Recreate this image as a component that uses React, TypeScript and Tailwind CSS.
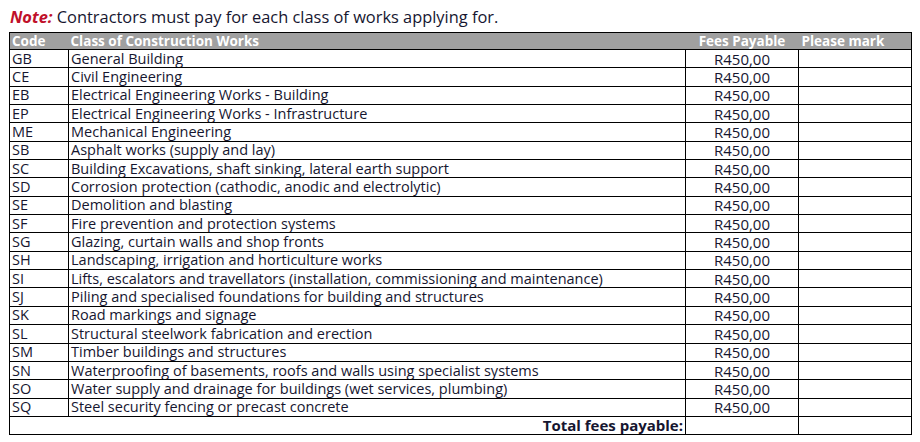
import React from "react";

const rows: [string, string][] = [
  ["GB", "General Building"],
  ["CE", "Civil Engineering"],
  ["EB", "Electrical Engineering Works - Building"],
  ["EP", "Electrical Engineering Works - Infrastructure"],
  ["ME", "Mechanical Engineering"],
  ["SB", "Asphalt works (supply and lay)"],
  ["SC", "Building Excavations, shaft sinking, lateral earth support"],
  ["SD", "Corrosion protection (cathodic, anodic and electrolytic)"],
  ["SE", "Demolition and blasting"],
  ["SF", "Fire prevention and protection systems"],
  ["SG", "Glazing, curtain walls and shop fronts"],
  ["SH", "Landscaping, irrigation and horticulture works"],
  ["SI", "Lifts, escalators and travellators (installation, commissioning and maintenance)"],
  ["SJ", "Piling and specialised foundations for building and structures"],
  ["SK", "Road markings and signage"],
  ["SL", "Structural steelwork fabrication and erection"],
  ["SM", "Timber buildings and structures"],
  ["SN", "Waterproofing of basements, roofs and walls using specialist systems"],
  ["SO", "Water supply and drainage for buildings (wet services, plumbing)"],
  ["SQ", "Steel security fencing or precast concrete"],
];

export default function App() {
  return (
    <div
      className="w-[920px] h-[442px] bg-white text-[#161630]"
      style={{ fontFamily: '"Open Sans", "Noto Sans", sans-serif' }}
    >
      <div className="pl-[10px] pt-[6px] h-[32px] text-[16.4px] leading-[22px]">
        <span className="font-bold italic text-[#c0102a]">Note:</span>{" "}
        <span>Contractors must pay for each class of works applying for.</span>
      </div>
      <table className="ml-[9px] border-collapse table-fixed w-[902px] text-[14.5px] leading-[16px]">
        <colgroup>
          <col className="w-[59px]" />
          <col className="w-[617px]" />
          <col className="w-[113px]" />
          <col className="w-[113px]" />
        </colgroup>
        <thead>
          <tr className="h-[16px] bg-[#a0a0a0] text-white font-bold text-[13.5px]">
            <th className="border-t border-l border-b border-black text-left pl-[2px] py-0 font-bold">Code</th>
            <th className="border-t border-b border-black text-left pl-[2px] py-0 font-bold">Class of Construction Works</th>
            <th className="border-t border-b border-black text-center py-0 font-bold">Fees Payable</th>
            <th className="border-t border-r border-b border-black text-left pl-[3px] py-0 font-bold">Please mark</th>
          </tr>
        </thead>
        <tbody>
          {rows.map(([code, name]) => (
            <tr key={code} className="h-[18.35px]">
              <td className="border border-black pl-[2px] py-0 whitespace-nowrap overflow-hidden">{code}</td>
              <td className="border border-black pl-[2px] py-0 whitespace-nowrap overflow-hidden">{name}</td>
              <td className="border border-black text-center py-0 text-[15px]">R450,00</td>
              <td className="border border-black py-0"></td>
            </tr>
          ))}
          <tr className="h-[18px]">
            <td colSpan={2} className="border border-black text-right pr-[2px] py-0 font-bold text-[15px]">
              Total fees payable:
            </td>
            <td className="border border-black py-0"></td>
            <td className="border border-black py-0"></td>
          </tr>
        </tbody>
      </table>
    </div>
  );
}
